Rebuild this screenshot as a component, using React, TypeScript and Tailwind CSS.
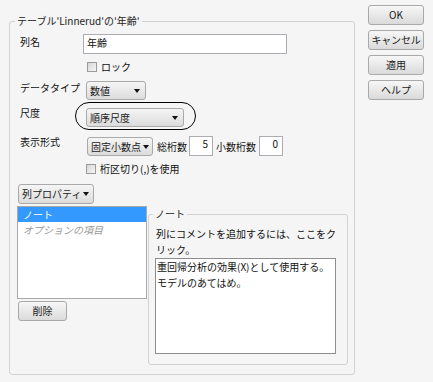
import type { ReactNode } from 'react';

const btn =
  'flex items-center justify-center rounded-[3px] border border-[#a9a9a9] bg-gradient-to-b from-[#f7f7f7] to-[#dadada] text-[10px] leading-none text-[#1a1a1a]';

function Arrow() {
  return (
    <svg width="6" height="4" viewBox="0 0 6 4" className="shrink-0">
      <path d="M0 0 L6 0 L3 4 Z" fill="#111" />
    </svg>
  );
}

function Drop({ label, className }: { label: string; className: string }) {
  return (
    <div
      className={`flex items-center justify-between h-[19px] pl-[3px] pr-[5px] rounded-[3px] border border-[#a9a9a9] bg-gradient-to-b from-[#f5f5f5] to-[#dcdcdc] text-[10px] leading-none text-[#1a1a1a] ${className}`}
    >
      <span className="whitespace-nowrap">{label}</span>
      <Arrow />
    </div>
  );
}

function Check({ children }: { children: ReactNode }) {
  return (
    <div className="flex items-center h-[12px] gap-[4px]">
      <span className="w-[10px] h-[10px] border border-[#9a9a9a] bg-gradient-to-br from-[#d6d6d6] to-[#f7f7f7]" />
      <span className="text-[10px] leading-none whitespace-nowrap">{children}</span>
    </div>
  );
}

export default function App() {
  return (
    <div className="w-[433px] h-[382px] bg-[#f5f5f5] flex font-['Noto_Sans_CJK_JP','Noto_Sans',sans-serif] text-[#111]">
      {/* Main group */}
      <div className="pl-[9px] pt-[14px]">
        <fieldset className="w-[345px] h-[361px] border border-[#d2d2d2] rounded-[3px] pl-[7px] pr-[6px]">
          <legend className="ml-[-2px] px-[2px] text-[10px] leading-[14px] text-[#222]">
            テーブル'Linnerud'の'年齢'
          </legend>

          <div className="flex flex-col text-[10px]">
            {/* 列名 */}
            <div className="flex mt-[6px] h-[20px]">
              <span className="w-[66px] pl-[3px] pt-[1px] leading-[14px]">列名</span>
              <div className="w-[204px] h-[20px] border border-[#abadb3] bg-white pl-[3px] pt-[1px] leading-[14px]">
                年齢
              </div>
            </div>

            {/* ロック */}
            <div className="mt-[7px] ml-[70px]">
              <Check>ロック</Check>
            </div>

            {/* データタイプ */}
            <div className="flex mt-[8px] h-[19px]">
              <span className="w-[69px] pl-[3px] leading-[14px] whitespace-nowrap">データタイプ</span>
              <Drop label="数値" className="w-[60px]" />
            </div>

            {/* 尺度 */}
            <div className="flex mt-[8px] h-[19px]">
              <span className="w-[69px] pl-[3px] -mt-[2px] leading-[14px]">尺度</span>
              <div className="relative">
                <Drop label="順序尺度" className="w-[98px]" />
                <span className="absolute -left-[11px] -right-[12px] -top-[6px] -bottom-[3px] rounded-full border-[1.5px] border-black" />
              </div>
            </div>

            {/* 表示形式 */}
            <div className="flex items-start mt-[10px] h-[19px]">
              <span className="w-[70px] pl-[3px] -mt-[2px] leading-[14px]">表示形式</span>
              <Drop label="固定小数点" className="w-[66px] gap-[2px] pr-[3px]" />
              <span className="ml-[4px] leading-[19px] whitespace-nowrap">総桁数</span>
              <div className="ml-[2px] -mt-[1px] w-[24px] h-[20px] border border-[#abadb3] bg-white text-right pr-[4px] leading-[14px]">
                5
              </div>
              <span className="ml-[3px] leading-[19px] whitespace-nowrap">小数桁数</span>
              <div className="ml-[3px] -mt-[1px] w-[24px] h-[20px] border border-[#abadb3] bg-white text-right pr-[4px] leading-[14px]">
                0
              </div>
            </div>

            {/* 桁区切り */}
            <div className="mt-[7px] ml-[69px]">
              <Check>桁区切り(,)を使用</Check>
            </div>

            {/* 列プロパティ */}
            <div className="mt-[9px] ml-[1px]">
              <Drop label="列プロパティ" className="w-[76px] h-[20px] gap-[2px]" />
            </div>

            <div className="flex items-start mt-[2px]">
              <div className="flex flex-col">
                <div className="w-[130px] h-[93px] border border-[#a9a9a9] bg-white">
                  <div className="h-[15px] bg-[#3399ff] text-white pl-[5px] leading-[15px]">ノート</div>
                  <div className="pl-[5px] leading-[16px] italic text-[#9a9a9a]">オプションの項目</div>
                </div>
                <div className={`${btn} mt-[2px] ml-[1px] w-[49px] h-[20px]`}>削除</div>
              </div>

              {/* ノート */}
              <fieldset className="ml-[1px] mt-[1px] w-[200px] h-[158px] border border-[#d2d2d2] rounded-[3px] pl-[6px]">
                <legend className="ml-[-2px] px-[2px] leading-[14px] text-[#222]">ノート</legend>
                <p className="mt-[5px] pl-[1px] leading-[16px] whitespace-nowrap">
                  列にコメントを追加するには、ここをク
                  <br />
                  リック。
                </p>
                <div className="w-[181px] h-[96px] border border-[#8e8e8e] bg-white pl-[1px] leading-[16px] whitespace-nowrap">
                  重回帰分析の効果(X)として使用する。
                  <br />
                  モデルのあてはめ。
                </div>
              </fieldset>
            </div>
          </div>
        </fieldset>
      </div>

      {/* Buttons */}
      <div className="ml-[13px] pt-[5px] flex flex-col gap-[5px]">
        <div className={`${btn} w-[56px] h-[20px]`}>OK</div>
        <div className={`${btn} w-[56px] h-[20px] tracking-[-0.2px] whitespace-nowrap`}>キャンセル</div>
        <div className={`${btn} w-[56px] h-[20px]`}>適用</div>
        <div className={`${btn} w-[56px] h-[20px]`}>ヘルプ</div>
      </div>
    </div>
  );
}
